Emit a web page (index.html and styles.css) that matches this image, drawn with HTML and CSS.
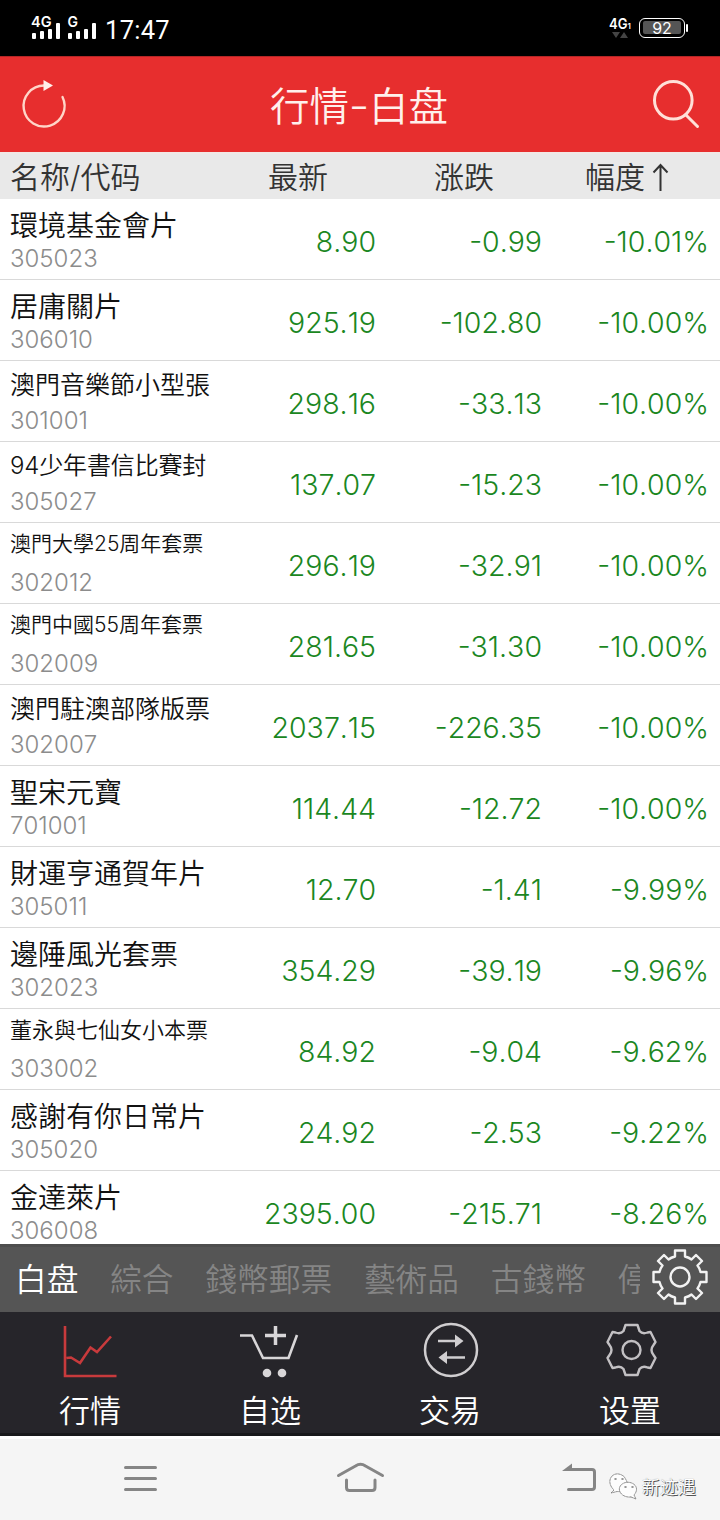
FILE: index.html
```html
<!DOCTYPE html>
<html lang="zh">
<head>
<meta charset="utf-8">
<title>行情-白盘</title>
<link rel="stylesheet" href="styles.css">
</head>
<body>
<div class="phone">
  <div class="status">
    <svg class="signal" width="66" height="30" viewBox="0 0 66 30">
      <g fill="#fff"><rect x="1" y="23" width="4" height="6" rx="1"/><rect x="9" y="21" width="4" height="8" rx="1"/><rect x="17" y="19" width="4" height="10" rx="1"/><rect x="25" y="13" width="4" height="16" rx="1"/>
      <rect x="37" y="23" width="4" height="6" rx="1"/><rect x="45" y="21" width="4" height="8" rx="1"/><rect x="53" y="19" width="4" height="10" rx="1"/><rect x="61" y="13" width="4" height="16" rx="1"/></g>
      <text x="0" y="16.500" class="net" textLength="20.500" lengthAdjust="spacingAndGlyphs">4G</text><text x="36.500" y="16.500" class="net" textLength="10.500" lengthAdjust="spacingAndGlyphs">G</text>
    </svg>
    <span class="clock">17:47</span>
    <svg class="data" width="24" height="26" viewBox="0 0 24 26">
      <text x="0" y="13.500" class="net" textLength="18.500" lengthAdjust="spacingAndGlyphs">4G</text><text x="18.500" y="14" class="tiny">1</text>
      <path d="M3 17h8l-4 6zM11 23h8l-4-6z" fill="#444"/>
    </svg>
    <span class="battery"><span class="level">92</span></span>
  </div>

  <header class="title-bar">
    <svg class="refresh" width="48" height="52" viewBox="0 0 48 52" fill="none"><path d="M24 6.500A20.500 20.500 0 1 0 42.500 18" stroke="#ffd5c8" stroke-width="2.400" stroke-linecap="round"/><path d="M23.500 1v11L33 6.500z" fill="#fff0ea"/></svg>
    <h1>行情<span class="dash">-</span>白盘</h1>
    <svg class="search" width="50" height="52" viewBox="0 0 50 52" fill="none" stroke="#ffe0d8" stroke-linecap="round"><circle cx="23.300" cy="21.300" r="18.800" stroke-width="3"/><path d="M36 36l11.500 11.500" stroke-width="3"/></svg>
  </header>

  <div class="row columns"><span class="c-name">名称/代码</span><span class="h1c">最新</span><span class="h2c">涨跌</span><span class="h3c">幅度<svg width="17" height="30" viewBox="0 0 17 30" fill="none" stroke="#333" stroke-width="2"><path d="M8.500 28V2M1.500 9.500L8.500 2l7 7.500"/></svg></span></div>

  <main class="list">
    <div class="row"><div class="c-name"><b>環境基金會片</b><i>305023</i></div><span>8.90</span><span>-0.99</span><span>-10.01%</span></div>
    <div class="row"><div class="c-name"><b>居庸關片</b><i>306010</i></div><span>925.19</span><span>-102.80</span><span>-10.00%</span></div>
    <div class="row"><div class="c-name"><b class="s25">澳門音樂節小型張</b><i>301001</i></div><span>298.16</span><span>-33.13</span><span>-10.00%</span></div>
    <div class="row"><div class="c-name"><b class="s24">94少年書信比賽封</b><i>305027</i></div><span>137.07</span><span>-15.23</span><span>-10.00%</span></div>
    <div class="row"><div class="c-name"><b class="s21">澳門大學25周年套票</b><i>302012</i></div><span>296.19</span><span>-32.91</span><span>-10.00%</span></div>
    <div class="row"><div class="c-name"><b class="s21">澳門中國55周年套票</b><i>302009</i></div><span>281.65</span><span>-31.30</span><span>-10.00%</span></div>
    <div class="row"><div class="c-name"><b class="s25">澳門駐澳部隊版票</b><i>302007</i></div><span>2037.15</span><span>-226.35</span><span>-10.00%</span></div>
    <div class="row"><div class="c-name"><b>聖宋元寶</b><i>701001</i></div><span>114.44</span><span>-12.72</span><span>-10.00%</span></div>
    <div class="row"><div class="c-name"><b>財運亨通賀年片</b><i>305011</i></div><span>12.70</span><span>-1.41</span><span>-9.99%</span></div>
    <div class="row"><div class="c-name"><b>邊陲風光套票</b><i>302023</i></div><span>354.29</span><span>-39.19</span><span>-9.96%</span></div>
    <div class="row"><div class="c-name"><b class="s22">董永與七仙女小本票</b><i>303002</i></div><span>84.92</span><span>-9.04</span><span>-9.62%</span></div>
    <div class="row"><div class="c-name"><b>感謝有你日常片</b><i>305020</i></div><span>24.92</span><span>-2.53</span><span>-9.22%</span></div>
    <div class="row"><div class="c-name"><b>金達萊片</b><i>306008</i></div><span>2395.00</span><span>-215.71</span><span>-8.26%</span></div>
  </main>

  <div class="boards">
    <div class="tabs"><span class="on">白盘</span><span>綜合</span><span>錢幣郵票</span><span>藝術品</span><span>古錢幣</span><span>停</span></div>
    <svg width="58" height="58" viewBox="-29 -29 58 58" fill="none" stroke="#f2f2f2" stroke-width="2.400" stroke-linejoin="round">
      <circle r="9.500"/>
      <path d="M-5-26.500H5V-20.500Q9-19.500 11.500-17.500L16-22L22-16L17.500-11.500Q19.500-9 20.500-5H26.500V5H20.500Q19.500 9 17.500 11.500L22 16L16 22L11.500 17.500Q9 19.500 5 20.500V26.500H-5V20.500Q-9 19.500-11.500 17.500L-16 22L-22 16L-17.500 11.500Q-19.500 9-20.500 5H-26.500V-5H-20.500Q-19.500-9-17.500-11.500L-22-16L-16-22L-11.500-17.500Q-9-19.500-5-20.500Z"/>
    </svg>
  </div>

  <nav class="nav">
    <div><svg width="60" height="60" viewBox="0 0 60 60" fill="none" stroke="#c83a3c" stroke-width="2.600"><path d="M5 4V54H56.500M6.500 36L11 35.500L20 41L30.500 25.500L37 30L51 14.500"/></svg><span>行情</span></div>
    <div><svg width="60" height="60" viewBox="0 0 60 60" fill="none" stroke="#d8d6d8" stroke-width="2.600"><path d="M0 13.500H12L23 36H48.500L57 13"/><path d="M25 13.500H46M35.500 4V23" stroke-width="3.500"/><g fill="#d8d6d8" stroke="none"><circle cx="27" cy="51" r="4.300"/><circle cx="42" cy="51" r="4.300"/></g></svg><span>自选</span></div>
    <div><svg width="60" height="60" viewBox="0 0 60 60" fill="none" stroke="#d0ced0" stroke-width="2.500"><circle cx="31" cy="28" r="26"/><path d="M18 19H37M25 35.500H45"/><path d="M35 12.500V25.500L43.500 19ZM27 29V42L18.500 35.500Z" fill="#d0ced0" stroke="none"/></svg><span>交易</span></div>
    <div><svg width="60" height="60" viewBox="-30 -30 60 60" fill="none" stroke="#c2c0c3" stroke-width="2.400" stroke-linejoin="round"><g transform="translate(1.500 -2)"><circle r="9"/><path d="M-6-25H6L8-19Q11-15.500 16-17.500L19-18L24-8L22-5Q18 0 22 5L24 8L19 18L16 17.500Q11 15.500 8 19L6 25H-6L-8 19Q-11 15.500-16 17.500L-19 18L-24 8L-22 5Q-18 0-22-5L-24-8L-19-18L-16-17.500Q-11-15.500-8-19Z"/></g></svg><span>设置</span></div>
  </nav>

  <footer class="system">
    <svg width="720" height="80" viewBox="0 0 720 80" fill="none" stroke="#858585" stroke-width="3" stroke-linecap="round" stroke-linejoin="round">
      <path d="M125.500 27.500H155.500M125.500 38.500H155.500M125.500 49.500H155.500"/>
      <path d="M338.500 35.500L355.500 26Q360.500 22.500 365.500 26L382.500 35.500M346.500 40V47.500Q346.500 50.500 349.500 50.500H372Q375 50.500 375 47.500V40"/>
      <path d="M568 29.500H592Q594.500 29.500 594.500 32V47Q594.500 49.500 592 49.500H568.500"/><path d="M562 31L572 23.500V31Z" fill="#858585" stroke="none"/>
      <g class="chat" fill="#fdfdfd" stroke="#777" stroke-width=".8" stroke-dasharray="2 1"><path d="M614 50l-3 3 6-1.500c11 1 14-5 7-15-10-8-20 4-10 13.500z"/><path d="M631 57l5 2-2-4c7-8-2-15-10-12-9 4-4 15 7 14z"/><path d="M615 39h1M622 39h1M625 47h1M632 47h1" stroke-width="1.500"/></g>
    </svg>
    <span class="watermark">新迹遇</span>
  </footer>
</div>
</body>
</html>
```
FILE: styles.css
```css
* { box-sizing: border-box; }
body { margin: 0; background: #fff; font-family: Inter, "Noto Sans CJK SC DemiLight", "Noto Sans CJK SC", sans-serif; font-weight: 350; font-kerning: none; }
.phone { width: 720px; height: 1520px; display: flex; flex-direction: column; overflow: hidden; }
svg { display: block; flex: none; }

.status { height: 56px; flex: none; background: #000; color: #fff; display: flex; align-items: flex-start; padding: 10px 35px 0 31px; }
.net { font: 600 15px Inter, sans-serif; fill: #fff; }
.tiny { font: 600 8px Inter, sans-serif; fill: #fff; }
.clock { margin: 5px 0 0 8px; font: 400 25.500px/30px Roboto, sans-serif; letter-spacing: .3px; }
.data { margin: 5px 6px 0 auto; }
.battery { position: relative; width: 46px; height: 20px; margin-top: 8px; border: 1.500px solid #fff; border-radius: 6px; padding: 2px 3px; }
.battery::after { content: ""; position: absolute; right: -4px; top: 5px; width: 2px; height: 8px; background: #fff; border-radius: 1px; }
.level { display: block; height: 13px; background: #555; border-radius: 2px; font: 400 16px/14px Inter, sans-serif; text-align: center; }

.title-bar { height: 96px; flex: none; background: #e72e2e; border-top: 1px solid #b32626; display: flex; align-items: flex-start; justify-content: space-between; padding: 22px 20px 0; }
.title-bar h1 { margin: 0; font-size: 39.500px; font-weight: 350; line-height: 56px; color: #fff0ec; }
.title-bar .dash { display: inline-block; width: 20px; text-align: center; transform: translateY(-1px) scaleX(1.15); }

.row { height: 81px; display: grid; grid-template-columns: 240px 136px 166px 166px; border-bottom: 1px solid #d9d9d9; font-feature-settings: "case", "calt" 0; }
.row > span { text-align: right; font-size: 28.500px; line-height: 85px; height: 80px; color: #1b871f; }
.row > span:last-child { margin-right: -1px; }
.c-name { padding-left: 10px; }
.c-name b { display: block; height: 47px; padding-top: 7px; font-size: 28px; font-weight: 350; line-height: 1.448; color: #111; white-space: nowrap; }
.c-name i { display: block; font-style: normal; font-size: 24px; line-height: 26px; color: #8c8c8c; }
.c-name .s25 { font-size: 25px; padding-top: 6px; }
.c-name .s24 { font-size: 24px; letter-spacing: -.15px; }
.c-name .s22 { font-size: 22px; padding-top: 6px; }
.c-name .s21 { font-size: 21px; padding-top: 6px; }
.columns { flex: none; height: 47px; background: #e9e9e9; border-bottom: 0; border-top: 2px solid #f1e8e6; }
.columns > span { font-size: 30px; line-height: 46px; height: 45px; color: #333; text-align: left; }
.columns .h1c { padding-left: 28px; }
.columns .h2c { padding-left: 58px; }
.columns .h3c { padding-left: 43px; display: flex; gap: 7px; }
.columns svg { margin-top: 9px; }
.list { height: 1045px; flex: none; overflow: hidden; }

.boards { height: 68px; flex: none; background: #555; border-top: 3px solid #4d4d4d; display: flex; align-items: flex-start; gap: 11px; padding-left: 15px; }
.tabs { width: 625px; overflow: hidden; display: flex; gap: 31.800px; white-space: nowrap; font-size: 31.700px; line-height: 66px; color: #858585; }
.tabs .on { color: #fff; }
.tabs + svg { margin-top: 1px; }

.nav { height: 124px; flex: none; background: #26252a; border-bottom: 3px solid #19191c; display: grid; grid-template-columns: repeat(4, 180px); }
.nav div { display: flex; flex-direction: column; align-items: center; padding-top: 10px; }
.nav span { font-size: 31px; line-height: 44px; margin-top: 7px; color: #fff; }

.system { position: relative; flex: none; height: 84px; padding-top: 1px; background: #f5f5f5; border-top: 3px solid #fff; }
.watermark { position: absolute; left: 642px; top: 36px; font-size: 18px; line-height: 26px; font-weight: 350; color: #fff; text-shadow: 1px 1px 0 #555, 0 0 1px #777; }
```
